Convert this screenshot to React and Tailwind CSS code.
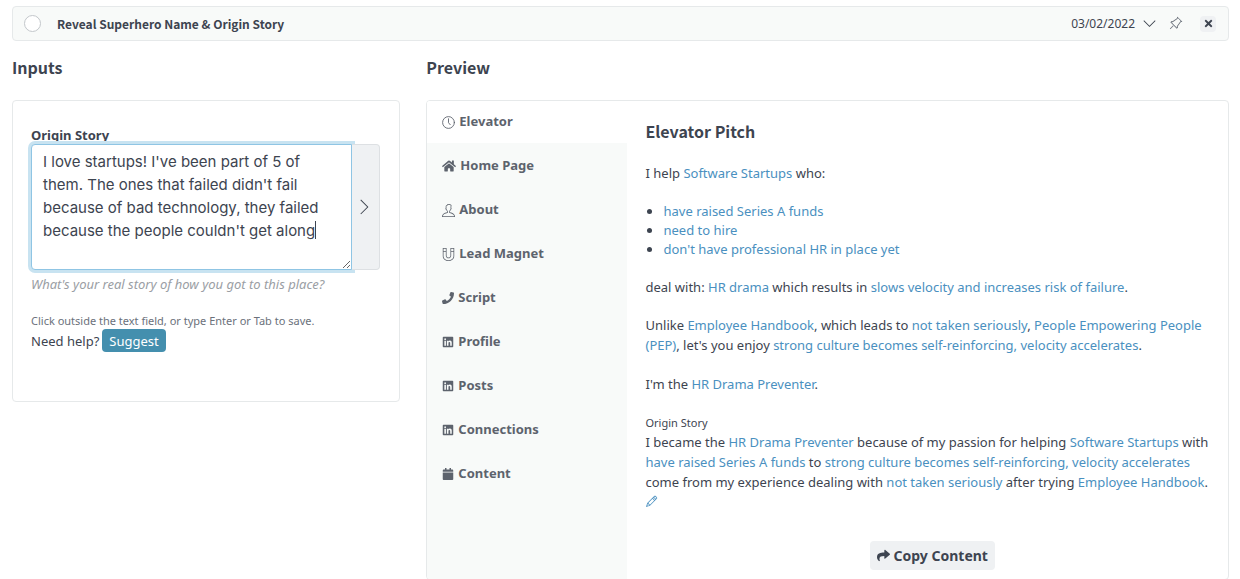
import { useState } from 'react';
import { FaCalendar, FaHome, FaLinkedin, FaPhone, FaShare, FaTimes } from 'react-icons/fa';
import { TfiAngleDown, TfiAngleRight, TfiMagnet, TfiPencil, TfiPin2, TfiUser } from 'react-icons/tfi';

const ClockIcon = () => (
  <svg width="13" height="13" viewBox="0 0 13 13" fill="none" stroke="currentColor" strokeWidth="0.9" strokeLinecap="round">
    <circle cx="6.5" cy="6.5" r="5.9" />
    <path d="M6.5 2.8v3.9l1.7 2" />
  </svg>
);

const tabs = [
  { name: 'Elevator', icon: <ClockIcon /> },
  { name: 'Home Page', icon: <FaHome size={14} /> },
  { name: 'About', icon: <TfiUser size={13} /> },
  { name: 'Lead Magnet', icon: <TfiMagnet size={13} /> },
  { name: 'Script', icon: <FaPhone size={12} /> },
  { name: 'Profile', icon: <FaLinkedin size={12} /> },
  { name: 'Posts', icon: <FaLinkedin size={12} /> },
  { name: 'Connections', icon: <FaLinkedin size={12} /> },
  { name: 'Content', icon: <FaCalendar size={12} /> },
];

const Field = ({ children }) => (
  <a href="#edit" className="text-[#4a90c0] hover:underline">{children}</a>
);

const TopBar = () => (
  <header className="flex items-center h-[35px] pl-[11px] pr-3 rounded border border-[#e6e9ea] bg-[#f8faf9]">
    <input type="checkbox" aria-label="Mark as done" className="appearance-none size-[17px] rounded-full border border-[#c3c7cb] bg-white" />
    <h1 className="ml-4 flex-1 font-['Noto_Sans_CJK_SC',sans-serif] font-bold text-xs leading-5">Reveal Superhero Name &amp; Origin Story</h1>
    <button className="flex items-center gap-2 text-xs">
      03/02/2022 <TfiAngleDown size={13} />
    </button>
    <button aria-label="Pin" className="ml-3 text-[#6b717b]"><TfiPin2 size={14} className="rotate-45" /></button>
    <button aria-label="Close" className="ml-[18px] flex items-center justify-center size-4 rounded-sm bg-[#eff1f3]"><FaTimes size={11} /></button>
  </header>
);

const Inputs = () => {
  const [story, setStory] = useState(
    "I love startups! I've been part of 5 of them. The ones that failed didn't fail because of bad technology, they failed because the people couldn't get along"
  );
  const [typing, setTyping] = useState(false);

  return (
    <section>
      <h2 className="font-['Noto_Sans_CJK_SC',sans-serif] font-bold text-base leading-6">Inputs</h2>
      <div className="mt-[21px] pl-[18px] pr-[19px] pt-[26px] pb-[49px] rounded border border-[#e6e9ea]">
        <label htmlFor="story" className="block font-bold text-[13px] leading-[17px]">Origin Story</label>
        <div className="relative flex h-[126px]">
          <textarea
            id="story"
            value={story}
            onChange={e => setStory(e.target.value)}
            onFocus={() => setTyping(true)}
            className="flex-1 min-w-0 px-[11px] py-[5px] rounded-l border border-[#8fc5e4] bg-white outline-none ring-3 ring-[#c8e3f1] font-[Inter,sans-serif] text-[15px] leading-[23px]"
          />
          {/* resting caret, gone once the field takes focus */}
          {!typing && <span className="absolute left-[284px] top-[77px] w-px h-[18px] bg-[#3d4450] pointer-events-none" />}
          <button aria-label="Next" className="flex items-center justify-center w-[28px] pr-1 rounded-r border border-l-0 border-[#dde0e3] bg-[#eff1f3]">
            <TfiAngleRight size={16} />
          </button>
        </div>
        <p className="mt-1 italic text-[13px] leading-5 text-[#9a9ea4]">What's your real story of how you got to this place?</p>
        <p className="mt-[19px] text-[11px] leading-4 text-[#6b717b]">Click outside the text field, or type Enter or Tab to save.</p>
        <div className="flex items-center gap-[3px] text-[13px] leading-5">
          Need help?
          <button className="h-[23px] px-[7px] rounded-sm bg-[#448fae] text-white">Suggest</button>
        </div>
      </div>
    </section>
  );
};

const Pitch = () => (
  <article className="flex-1 min-w-0 pl-[18px] pr-[9px] pt-[18px] pb-[9px] text-[13px] leading-5">
    <h3 className="font-['Noto_Sans_CJK_SC',sans-serif] font-bold text-base leading-6">Elevator Pitch</h3>
    <p className="mt-5">I help <Field>Software Startups</Field> who:</p>
    <ul className="mt-[19px] pl-[18px] list-disc leading-[19px]">
      <li><Field>have raised Series A funds</Field></li>
      <li><Field>need to hire</Field></li>
      <li><Field>don't have professional HR in place yet</Field></li>
    </ul>
    <p className="mt-[18px]">deal with: <Field>HR drama</Field> which results in <Field>slows velocity and increases risk of failure</Field>.</p>
    <p className="mt-[18px]">
      Unlike <Field>Employee Handbook</Field>, which leads to <Field>not taken seriously</Field>, <Field>People Empowering People (PEP)</Field>, let's you enjoy <Field>strong culture becomes self-reinforcing, velocity accelerates</Field>.
    </p>
    <p className="mt-[19px]">I'm the <Field>HR Drama Preventer</Field>.</p>
    <h4 className="mt-5 text-[11px] leading-[18px]">Origin Story</h4>
    <p>
      I became the <Field>HR Drama Preventer</Field> because of my passion for helping <Field>Software Startups</Field> with <Field>have raised Series A funds</Field> to <Field>strong culture becomes self-reinforcing, velocity accelerates</Field> come from my experience dealing with <Field>not taken seriously</Field> after trying <Field>Employee Handbook</Field>.
    </p>
    <button aria-label="Edit" className="flex items-center h-[18px] text-[#4a90c0]"><TfiPencil size={13} /></button>
    <button className="mx-auto mt-[31px] flex items-center gap-1 h-[29px] px-[7px] rounded-sm bg-[#eff1f3] font-bold text-sm">
      <FaShare size={13} /> Copy Content
    </button>
  </article>
);

const Preview = () => {
  const [active, setActive] = useState('Elevator');

  return (
    <section className="col-span-2">
      <h2 className="font-['Noto_Sans_CJK_SC',sans-serif] font-bold text-base leading-6">Preview</h2>
      <div className="mt-[21px] flex rounded border border-[#e6e9ea] overflow-hidden">
        <nav className="w-1/4 bg-[#f8faf9]">
          {tabs.map(t => (
            <button
              key={t.name}
              onClick={() => setActive(t.name)}
              className={`flex items-center gap-1 w-full h-11 px-[15px] pt-[2px] first:h-[42px] first:pt-0 font-bold text-[13px] text-[#5d636d] ${active === t.name ? 'bg-white' : ''}`}
            >
              {t.icon} {t.name}
            </button>
          ))}
        </nav>
        <Pitch />
      </div>
    </section>
  );
};

const App = () => (
  <main className="pl-3 pr-[11px] pt-[6px] bg-white text-[#3d4450] font-['Noto_Sans',sans-serif]">
    <TopBar />
    <div className="mt-[14px] grid grid-cols-3 gap-[26px] items-start">
      <Inputs />
      <Preview />
    </div>
  </main>
);

export default App;
